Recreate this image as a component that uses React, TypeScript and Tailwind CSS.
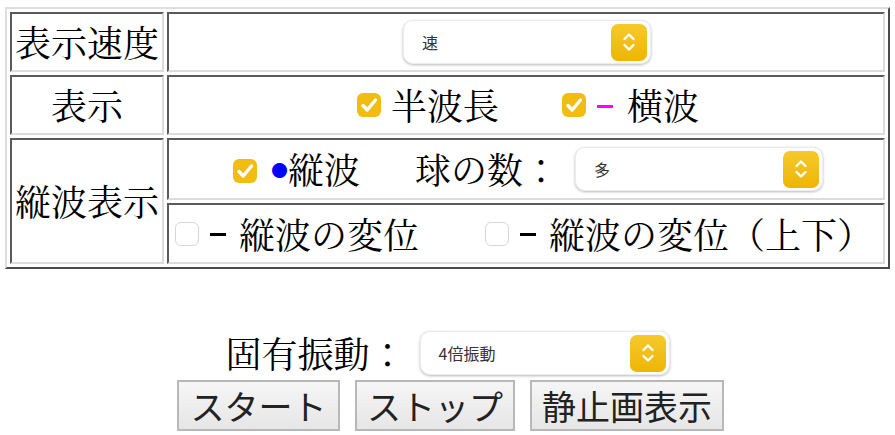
import React from "react";

function Chevrons() {
  return (
    <svg viewBox="0 0 14 22" className="w-[14px] h-[22px]">
      <path d="M2.5 8 L7 3.5 L11.5 8" stroke="white" strokeWidth="2.4" fill="none" strokeLinecap="round" strokeLinejoin="round" />
      <path d="M2.5 14 L7 18.5 L11.5 14" stroke="white" strokeWidth="2.4" fill="none" strokeLinecap="round" strokeLinejoin="round" />
    </svg>
  );
}

function Check({ on }: { on: boolean }) {
  if (on) {
    return (
      <span className="inline-flex w-[24px] h-[24px] rounded-[6px] bg-[#f2bd12] items-center justify-center shrink-0">
        <svg viewBox="0 0 24 24" className="w-[24px] h-[24px]">
          <path d="M6 12.5 L10.2 17 L18.5 7" stroke="white" strokeWidth="3.4" fill="none" strokeLinecap="round" strokeLinejoin="round" />
        </svg>
      </span>
    );
  }
  return <span className="inline-block w-[24px] h-[24px] rounded-[6px] border border-[#d6d6d6] bg-white shrink-0" />;
}

function Dash({ color }: { color: string }) {
  return <span className={"inline-block w-[16px] h-[3px] relative top-[1px] " + color} />;
}

function Sel({ text, cls }: { text: string; cls: string }) {
  return (
    <div
      className={
        "flex items-center justify-between rounded-[10px] bg-white border border-[#ececec] shadow-[0_1px_3px_rgba(0,0,0,0.28)] pl-[18px] pr-[3px] h-[44px] font-['Noto_Sans_CJK_JP',sans-serif] text-[16px] text-[#333] " +
        cls
      }
    >
      <span>{text}</span>
      <span className="flex items-center justify-center w-[36px] h-[37px] rounded-[7px] bg-gradient-to-b from-[#f6c928] to-[#eeb500]">
        <Chevrons />
      </span>
    </div>
  );
}

const cell =
  "border-2 border-t-[#5a5a5a] border-l-[#5a5a5a] border-b-[#dcdcdc] border-r-[#dcdcdc] p-0";

export default function App() {
  return (
    <div className="w-[895px] h-[435px] bg-white text-black font-['Noto_Serif_CJK_JP','Noto_Sans_CJK_JP',serif] text-[36px] leading-none">
      <table className="ml-[5px] mt-[7px] w-[885px] border-separate border-spacing-[3px] border-2 border-t-[#dedede] border-l-[#dedede] border-b-[#4a4a4a] border-r-[#4a4a4a]">
        <tbody>
          <tr>
            <td className={cell + " w-[154px] h-[60px] text-center"}>表示速度</td>
            <td className={cell + " h-[60px]"}>
              <div className="flex justify-center pl-[2px]">
                <Sel text="速" cls="w-[248px]" />
              </div>
            </td>
          </tr>
          <tr>
            <td className={cell + " h-[60px] text-center"}>表示</td>
            <td className={cell + " h-[60px]"}>
              <div className="flex items-center justify-center pl-[4px]">
                <Check on />
                <span className="ml-[10px]">半波長</span>
                <span className="ml-[63px] flex"><Check on /></span>
                <span className="ml-[11px] flex"><Dash color="bg-[#ff00ff]" /></span>
                <span className="ml-[14px]">横波</span>
              </div>
            </td>
          </tr>
          <tr>
            <td rowSpan={2} className={cell + " text-center"}>縦波表示</td>
            <td className={cell + " h-[62px]"}>
              <div className="flex items-center justify-center pl-[4px]">
                <span className="relative top-[2px] flex"><Check on /></span>
                <span className="ml-[14px] text-[#0000ff] text-[17px]">●</span>
                <span>縦波</span>
                <span className="ml-[55px]">球の数：</span>
                <span className="ml-[16px]"><Sel text="多" cls="w-[248px]" /></span>
              </div>
            </td>
          </tr>
          <tr>
            <td className={cell + " h-[61px]"}>
              <div className="flex items-center pl-[6px]">
                <Check on={false} />
                <span className="ml-[11px] flex"><Dash color="bg-black" /></span>
                <span className="ml-[13px]">縦波の変位</span>
                <span className="ml-[66px] flex"><Check on={false} /></span>
                <span className="ml-[11px] flex"><Dash color="bg-black" /></span>
                <span className="ml-[13px]">縦波の変位（上下）</span>
              </div>
            </td>
          </tr>
        </tbody>
      </table>
      <div className="mt-[62px] flex items-center justify-center">
        <span>固有振動：</span>
        <span className="ml-[14px]"><Sel text="4倍振動" cls="w-[250px]" /></span>
      </div>
      <div className="mt-[5px] flex justify-center gap-[15px] pl-[6px] font-['Noto_Sans_CJK_JP',sans-serif] text-[34px] text-[#222]">
        <button className="h-[51px] w-[163px] border-2 border-[#b8b8b8] bg-gradient-to-b from-[#f6f6f6] to-[#e6e6e6] leading-none">スタート</button>
        <button className="h-[51px] w-[160px] border-2 border-[#b8b8b8] bg-gradient-to-b from-[#f6f6f6] to-[#e6e6e6] leading-none">ストップ</button>
        <button className="h-[51px] w-[194px] border-2 border-[#b8b8b8] bg-gradient-to-b from-[#f6f6f6] to-[#e6e6e6] leading-none">静止画表示</button>
      </div>
    </div>
  );
}
